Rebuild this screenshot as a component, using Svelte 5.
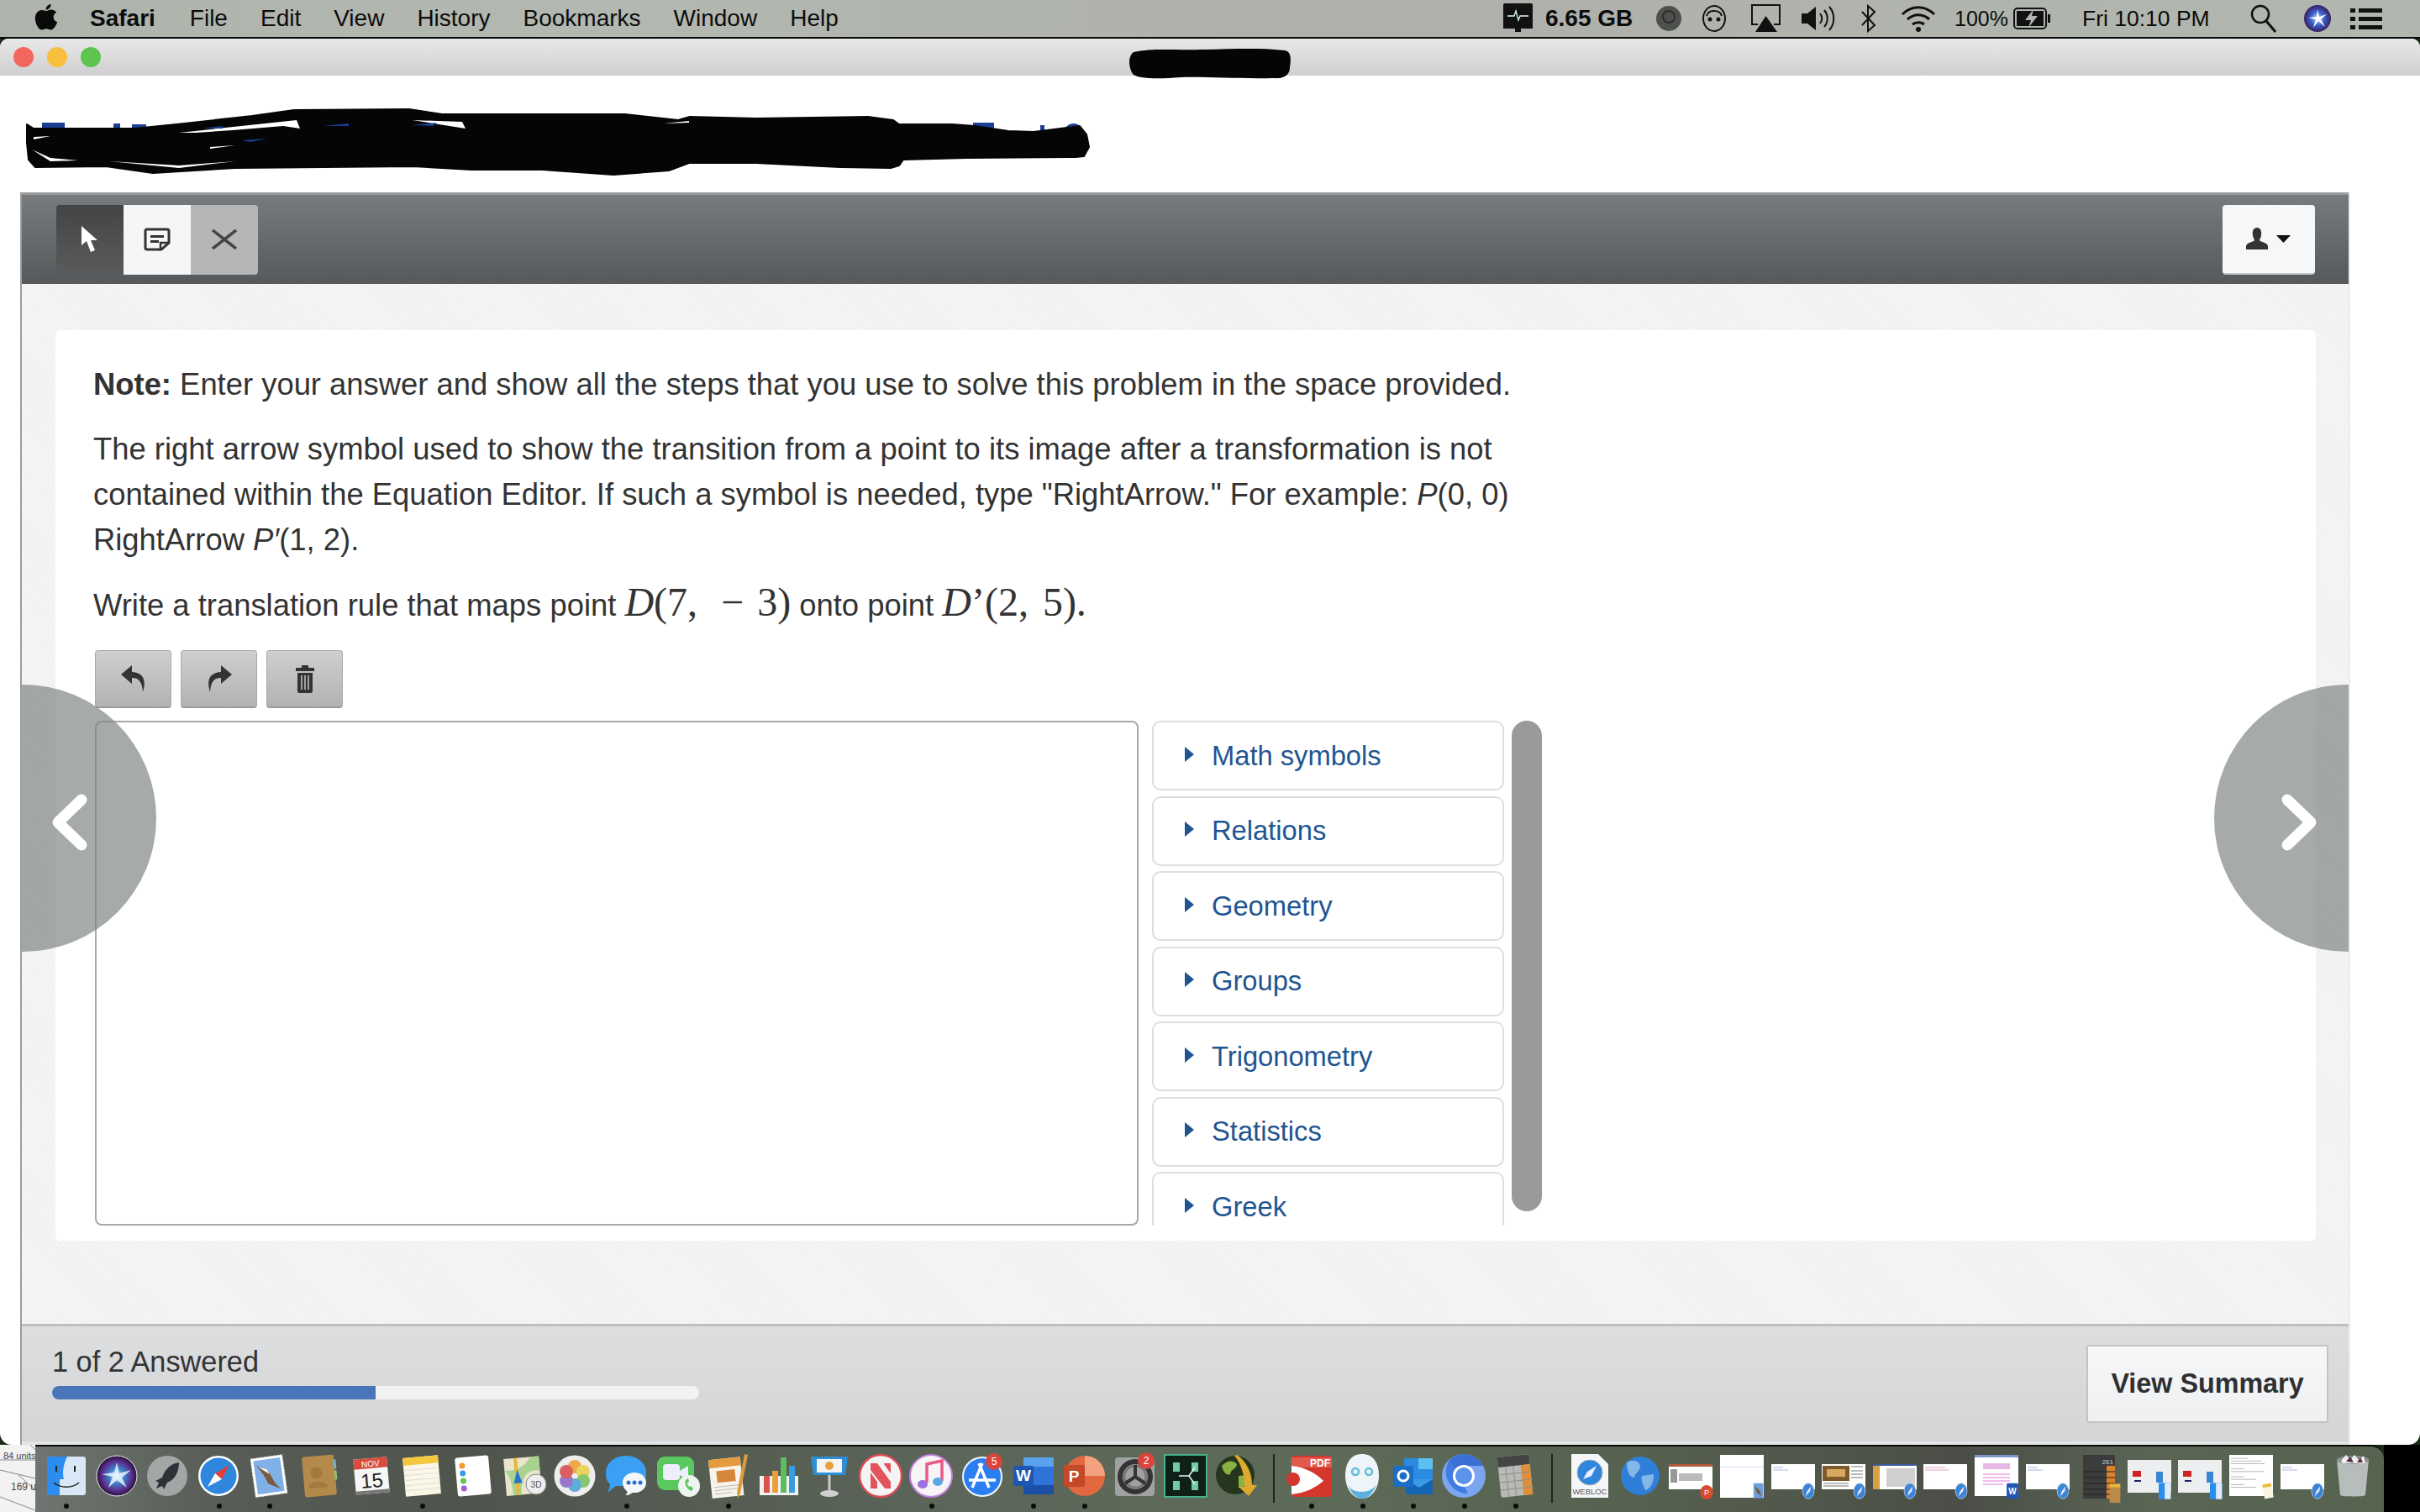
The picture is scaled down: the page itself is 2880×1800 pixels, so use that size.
<script>
  const menus = ['File','Edit','View','History','Bookmarks','Window','Help'];
  const rows = ['Math symbols','Relations','Geometry','Groups','Trigonometry','Statistics','Greek'];
  const answered = 1, total = 2;
  const pct = (answered / total) * 100;
</script>

<div class="screen">
  <header class="menubar">
    <svg class="apple" width="28" height="32" viewBox="0 0 28 34"><path d="M20 1c.3 3-2.500 7-6.400 7C13.200 4.600 16.300 1.400 20 1zM14 9.500c1.800 0 3.500-1.500 6.400-1.500 2.300 0 4.900 1.200 6.400 3.500-5.400 3.100-4.400 10.500 1.200 12.500-1.500 4-4.700 9.500-8 9.500-2.200 0-3.200-1.400-5.800-1.400s-3.700 1.400-5.800 1.400C4.600 33.500 0 25.500 0 19 0 12.500 4 8.500 8.400 8.500c2.400 0 4.200 1 5.600 1z" fill="#0a0a0a"/></svg>
    <b class="app">Safari</b>
    {#each menus as m}<span class="menu">{m}</span>{/each}
    <div class="spacer"></div>
    <svg class="mi m0" width="35" height="36" viewBox="0 0 35 36"><rect width="35" height="29" rx="2" fill="#111"/><rect x="14" y="29" width="7" height="5" fill="#111"/><rect y="26" width="35" height="4" fill="#111"/><path d="M5 15h8l2-6 3 11 2-5h10" stroke="#dfe" stroke-width="1.300" fill="none"/></svg>
    <b class="gb">6.65 GB</b>
    <svg class="mi m1" width="30" height="32" viewBox="0 0 30 32"><circle cx="15" cy="16" r="15" fill="#4d504c"/><circle cx="15" cy="14" r="7" fill="none" stroke="#2c2e2c" stroke-width="2"/></svg>
    <svg class="mi m1" width="28" height="32" viewBox="0 0 28 32"><ellipse cx="14" cy="16" rx="13" ry="15" fill="none" stroke="#111" stroke-width="2"/><path d="M5 13c2-8 16-8 18 0" fill="none" stroke="#111" stroke-width="2"/><circle cx="9" cy="17" r="2.500" fill="#111"/><circle cx="19" cy="17" r="2.500" fill="#111"/></svg>
    <svg class="mi m2" width="35" height="34" viewBox="0 0 35 34"><path d="M8 24H1V1h33v23h-7" fill="none" stroke="#111" stroke-width="2"/><path d="M17.500 14L31 33H5z" fill="#111"/></svg>
    <svg class="mi m3" width="41" height="32" viewBox="0 0 41 32"><path d="M0 10h7l10-8v28L7 22H0z" fill="#111"/><path d="M22 10c3 4 3 8 0 12M27 6c5 6 5 14 0 20M33 2c7 8 7 20 0 28" fill="none" stroke="#111" stroke-width="2"/></svg>
    <svg class="mi m4" width="19" height="34" viewBox="0 0 19 34"><path d="M2 9l15 16-8 7V2l8 7L2 25" fill="none" stroke="#111" stroke-width="2"/></svg>
    <svg class="mi m4" width="42" height="32" viewBox="0 0 42 32"><path d="M2 11c11-11 27-11 38 0M8 17c8-7 18-7 26 0M14 23c4-3 10-3 14 0" fill="none" stroke="#111" stroke-width="3"/><circle cx="21" cy="29" r="3" fill="#111"/></svg>
    <span class="pc">100%</span>
    <svg class="mi m5" width="45" height="26" viewBox="0 0 45 26"><rect x="1" y="1" width="38" height="24" rx="4" fill="none" stroke="#111" stroke-width="2"/><rect x="4" y="4" width="32" height="18" fill="#111"/><rect x="41" y="8" width="3" height="10" fill="#111"/><path d="M24 2L14 15h7l-3 9 11-14h-7z" fill="#b0b5ae"/></svg>
    <span class="clock">Fri 10:10 PM</span>
    <svg class="mi m6" width="31" height="34" viewBox="0 0 31 34"><circle cx="12" cy="12" r="10" fill="none" stroke="#111" stroke-width="2.500"/><path d="M19 20l11 13" stroke="#111" stroke-width="3"/></svg>
    <svg class="mi m7" width="32" height="32" viewBox="0 0 32 32"><defs><radialGradient id="sr"><stop offset="0" stop-color="#bfe9ff"/><stop offset=".5" stop-color="#3a63c9"/><stop offset="1" stop-color="#3a1d62"/></radialGradient></defs><circle cx="16" cy="16" r="16" fill="url(#sr)"/><path d="M16 5l2 9 9-3-7 6 5 9-8-7-6 8 3-10-9-2 10-1z" fill="#fff"/></svg>
    <svg class="mi m8" width="38" height="26" viewBox="0 0 38 26"><path d="M0 1h6v5H0zM0 11h6v5H0zM0 21h6v5H0zM10 1h28v5H10zM10 11h28v5H10zM10 21h28v5H10z" fill="#111"/></svg>
  </header>

  <div class="window">
    <div class="titlebar">
      <i class="light red"></i><i class="light yellow"></i><i class="light green"></i>
      <svg class="blackout" width="194" height="40" viewBox="0 0 194 40"><path d="M6 6C30 1 50 4 90 3s70-2 96 1c7 1 8 9 6 20 0 9-6 14-20 13-40 1-80-2-110-1-25 2-48 2-56-3C1 28-2 12 6 6z" fill="#050505"/></svg>
    </div>

    <div class="pagehead">
      <svg class="scribble" width="1300" height="100" viewBox="0 0 1300 100">
        <g fill="#1b3f92">
          <rect x="20" y="26" width="27" height="9"/><rect x="105" y="27" width="8" height="8"/><rect x="127" y="28" width="17" height="7"/><rect x="1128" y="26" width="25" height="7"/><rect x="1208" y="29" width="5" height="9"/><path d="M1238 32c5-7 16-7 20 2l-2 6h-16z"/>
        </g>
        <path d="M2 28L10 33 130 33 180 28 270 18 320 11 457 10 496 16 714 16 777 23 791 19 870 21 1003 19 1033 23 1040 28 1103 28 1130 30 1170 36 1200 37 1240 32 1255 30 1263 40 1266 55 1260 66 1250 67 1120 68 1045 70 1040 77 1030 80 970 79 870 74 790 74 766 83 700 88 615 82 531 82 461 78 250 80 152 86 96 78 12 79 4 70 2 50Z" fill="#050505" stroke="#050505" stroke-width="2" stroke-linejoin="round"/>
        <path d="M183 38L323 23 327 33 307 30 247 35 203 38ZM461 23L524 33 520 25ZM100 72L183 77 250 72 183 80ZM8 58L30 68 63 71 30 72ZM10 43L30 42 10 46ZM220 55L250 53 220 57ZM760 27L790 24 790 26Z" fill="#fff"/>
        <path d="M210 33l25-3 0 3zM355 30l30-3 0 3zM258 47l30-2-20 4zM460 29l30-3-5 4zM1 0" fill="#1b3f92"/>
      </svg>
    </div>

    <div class="player">
      <div class="toolbar">
        <div class="seg">
          <button class="tool dark" aria-label="select"><svg width="22" height="32" viewBox="0 0 22 32"><path d="M1 0v23l6-5 5 13 5-2-5-12h8z" fill="#fff"/></svg></button>
          <button class="tool light-t" aria-label="note"><svg width="32" height="28" viewBox="0 0 32 28"><path d="M4 2h24a2 2 0 0 1 2 2v14l-9 8H4a2 2 0 0 1-2-2V4a2 2 0 0 1 2-2z" fill="none" stroke="#333" stroke-width="3"/><path d="M8 9h16v3H8zM8 15h10v3H8z" fill="#333"/><path d="M29 18h-9v8" fill="none" stroke="#333" stroke-width="2.500"/></svg></button>
          <button class="tool mid" aria-label="close"><svg width="32" height="24" viewBox="0 0 32 24"><path d="M2 1l28 22M30 1L2 23" stroke="#444" stroke-width="3.500"/></svg></button>
        </div>
        <button class="user" aria-label="user"><svg width="54" height="26" viewBox="0 0 54 26"><path d="M13 0c4 0 6 4 5 9 0 3-2 5-2 6 1 2 10 3 10 7v4H0v-4c0-4 9-5 10-7 0-1-2-3-2-6-1-5 1-9 5-9z" fill="#333"/><path d="M36 9h17l-8.500 9z" fill="#111"/></svg></button>
      </div>

      <main class="content">
        <section class="card">
          <div class="prose">
            <p><b>Note:</b> Enter your answer and show all the steps that you use to solve this problem in the space provided.</p>
            <p>The right arrow symbol used to show the transition from a point to its image after a transformation is not contained within the Equation Editor. If such a symbol is needed, type "RightArrow." For example: <i>P</i>(0, 0) RightArrow <i>P′</i>(1, 2).</p>
            <p class="q">Write a translation rule that maps point <span class="tex"><i>D</i>(7,<span class="sp1"></span>−<span class="sp2"></span>3)</span> onto point <span class="tex"><i>D</i>’(2,<span class="sp3"></span>5).</span></p>
          </div>
          <div class="editbtns">
            <button class="ebtn" aria-label="undo"><svg width="30" height="32" viewBox="0 0 30 32"><path d="M13 0L0 11l13 11v-7c8 0 12 4 13 17 4-13 2-23-13-24z" fill="#333"/></svg></button>
            <button class="ebtn" aria-label="redo"><svg width="30" height="32" viewBox="0 0 30 32"><path d="M17 0l13 11-13 11v-7C9 15 5 19 4 32 0 19 2 9 17 8z" fill="#333"/></svg></button>
            <button class="ebtn" aria-label="delete"><svg width="24" height="34" viewBox="0 0 24 34"><path d="M8 1h8v3h7v4H1V4h7zM3 10h18v22a2 2 0 0 1-2 2H5a2 2 0 0 1-2-2z" fill="#333"/><path d="M8 13v17M12 13v17M16 13v17" stroke="#bbb" stroke-width="1.600"/></svg></button>
          </div>
          <div class="editor">
            <div class="answer"></div>
            <div class="palette">
              {#each rows as r}
                <div class="row"><span class="tri"></span><span>{r}</span></div>
              {/each}
            </div>
            <div class="thumb"></div>
          </div>
        </section>
      </main>

      <footer class="foot">
        <div class="prog">
          <div class="plabel">{answered} of {total} Answered</div>
          <div class="pbar"><div class="pfill" style:width="{pct}%"></div></div>
        </div>
        <button class="summary">View Summary</button>
      </footer>

      <div class="nav prev"><svg width="46" height="70" viewBox="0 0 46 70"><path d="M37 8L9 35l28 27" fill="none" stroke="#fff" stroke-width="13" stroke-linecap="round" stroke-linejoin="round"/></svg></div>
      <div class="nav next"><svg width="46" height="70" viewBox="0 0 46 70"><path d="M9 8l28 27L9 62" fill="none" stroke="#fff" stroke-width="13" stroke-linecap="round" stroke-linejoin="round"/></svg></div>
    </div>
  </div>

  <div class="bottom">
    <div class="geo">
      <svg width="42" height="80" viewBox="0 0 42 80"><path d="M36 0l6 6M0 30l42 10M22 36L42 54M0 62l42 16M0 18h42" stroke="#888" fill="none"/></svg>
      <span class="g1">84 units²</span><span class="g2">169 unit</span>
    </div>
    <nav class="dock">
      <div class="slot on"><svg width="60" height="60" viewBox="0 0 60 60"><rect x="8" y="7" width="46" height="46" rx="3" fill="#d8e8f6"/><path d="M11 7h21c-5 10-6 20-4 27h-5v19H11a3 3 0 0 1-3-3V10a3 3 0 0 1 3-3z" fill="#2b8df0"/><path d="M19 18v7M41 18v7" stroke="#222" stroke-width="2"/><path d="M16 38c8 7 22 7 30 0" fill="none" stroke="#222" stroke-width="1.500"/></svg></div>
      <div class="slot"><svg width="60" height="60" viewBox="0 0 60 60"><defs><radialGradient id="s2"><stop offset="0" stop-color="#e9f8ff"/><stop offset=".35" stop-color="#3e88c9"/><stop offset=".75" stop-color="#5b2b8d"/><stop offset="1" stop-color="#231436"/></radialGradient></defs><circle cx="30" cy="30" r="24" fill="url(#s2)" stroke="#eee"/><path d="M30 14l3 13 14-4-11 9 6 12-12-9-10 9 5-13-13-3 15-2z" fill="#e8f4ff" opacity=".85"/></svg></div>
      <div class="slot"><svg width="60" height="60" viewBox="0 0 60 60"><circle cx="30" cy="30" r="24" fill="#a4a6a6"/><path d="M44 14c-9 1-17 8-20 18l-8 4 4 2-3 7 7-3 2 4 4-8c9-3 14-13 14-24z" fill="#2e3136"/></svg></div>
      <div class="slot on"><svg width="60" height="60" viewBox="0 0 60 60"><circle cx="30" cy="30" r="24" fill="#fff"/><circle cx="30" cy="30" r="21.500" fill="#2e87dd"/><path d="M43 17L26 27l8 7z" fill="#e53d33"/><path d="M17 43l9-16 8 7z" fill="#fff"/></svg></div>
      <div class="slot on"><svg width="60" height="60" viewBox="0 0 60 60"><g transform="rotate(-8 30 30)"><rect x="10" y="7" width="38" height="46" fill="#fff" stroke="#ddd" stroke-dasharray="2 2"/><rect x="13" y="10" width="32" height="40" fill="#7fb0e6"/><path d="M16 16l14 10 5 13 6 8-14-8-4-11z" fill="#7a5a3e"/><path d="M18 18l10 4 2 6z" fill="#eee"/></g></svg></div>
      <div class="slot"><svg width="60" height="60" viewBox="0 0 60 60"><g transform="rotate(-5 30 30)"><rect x="10" y="6" width="38" height="48" rx="3" fill="#b48a4b"/><rect x="47" y="12" width="3" height="11" fill="#6ab1d8"/><rect x="47" y="25" width="3" height="11" fill="#8cc07a"/><circle cx="26" cy="26" r="7" fill="#a07a3e"/><path d="M14 44c2-10 22-10 24 0z" fill="#a07a3e"/></g></svg></div>
      <div class="slot"><svg width="60" height="60" viewBox="0 0 60 60"><g transform="rotate(-5 30 30)"><rect x="10" y="9" width="40" height="42" fill="#f6f6f6"/><rect x="10" y="9" width="40" height="12" fill="#d84c3f"/><rect x="10" y="47" width="40" height="4" fill="#777"/><text x="30" y="19" font-size="10" text-anchor="middle" fill="#fff" font-family="Liberation Sans, sans-serif">NOV</text><text x="30" y="44" font-size="24" text-anchor="middle" fill="#222" font-family="Liberation Sans, sans-serif">15</text></g></svg></div>
      <div class="slot on"><svg width="60" height="60" viewBox="0 0 60 60"><g transform="rotate(-5 30 30)"><rect x="9" y="7" width="42" height="46" fill="#fbf7e6"/><rect x="9" y="7" width="42" height="9" fill="#f5c93f"/><path d="M9 22h42M9 28h42M9 34h42M9 40h42M9 46h42" stroke="#ddd"/></g></svg></div>
      <div class="slot"><svg width="60" height="60" viewBox="0 0 60 60"><g transform="rotate(-5 30 30)"><rect x="10" y="7" width="40" height="46" rx="3" fill="#fff"/><circle cx="18" cy="17" r="3.500" fill="#f29b38"/><circle cx="18" cy="26" r="3.500" fill="#3a9be5"/><circle cx="18" cy="35" r="3.500" fill="#62c555"/><circle cx="18" cy="44" r="3.500" fill="#a560d8"/></g></svg></div>
      <div class="slot"><svg width="60" height="60" viewBox="0 0 60 60"><g transform="rotate(-5 30 30)"><rect x="7" y="8" width="42" height="44" fill="#e9e4cb"/><path d="M7 22c14 2 26-4 32-14h10v18c-12-6-24 4-24 26H15c0-14-2-24-8-30z" fill="#a9d28e"/><path d="M21 8v44" stroke="#e8b83c" stroke-width="4"/><path d="M22 22l5 16H17z" fill="#2374d1"/></g><circle cx="44" cy="40" r="12" fill="#eee" stroke="#888"/><text x="44" y="44" font-size="10" text-anchor="middle" fill="#555" font-family="Liberation Sans, sans-serif">3D</text></svg></div>
      <div class="slot"><svg width="60" height="60" viewBox="0 0 60 60"><circle cx="30" cy="30" r="24.500" fill="#eee"/><g opacity=".9"><circle cx="30" cy="19" r="8" fill="#f0a13a"/><circle cx="40" cy="25" r="8" fill="#e9d34e"/><circle cx="40" cy="36" r="8" fill="#7dc261"/><circle cx="30" cy="41" r="8" fill="#4ea6d9"/><circle cx="20" cy="36" r="8" fill="#8e6cc4"/><circle cx="20" cy="25" r="8" fill="#d9504f"/></g></svg></div>
      <div class="slot on"><svg width="60" height="60" viewBox="0 0 60 60"><path d="M30 6c14 0 24 9 24 21 0 6-3 11-7 15H18L8 50c1-3 3-6 3-10-4-4-5-8-5-13C6 15 16 6 30 6z" fill="#3aa0f4"/><path d="M40 26c8 0 14 5 14 12s-6 12-14 12c-2 0-3 0-4 1-2 2-5 2-7 2 2-1 3-3 2-5-3-2-5-6-5-10 0-7 6-12 14-12z" fill="#f3f6fb"/><circle cx="33" cy="38" r="2.500" fill="#2a6fd1"/><circle cx="40" cy="38" r="2.500" fill="#2a6fd1"/><circle cx="47" cy="38" r="2.500" fill="#2a6fd1"/></svg></div>
      <div class="slot"><svg width="60" height="60" viewBox="0 0 60 60"><rect x="7" y="7" width="44" height="40" rx="9" fill="#59c85d"/><rect x="14" y="16" width="20" height="19" rx="4" fill="#eef"/><path d="M34 24l10-6v17l-10-6z" fill="#eef"/><circle cx="45" cy="42" r="13" fill="#f0f4f0"/><path d="M41 35c-2 4 1 11 7 13l2-3-3-3-2 1c-1-1-2-3-2-5l2-1-1-4z" fill="#59c85d"/></svg></div>
      <div class="slot on"><svg width="60" height="60" viewBox="0 0 60 60"><g transform="rotate(-6 30 30)"><rect x="9" y="9" width="38" height="46" fill="#f6f3ea"/><rect x="9" y="9" width="38" height="10" fill="#e69a3e"/><rect x="17" y="23" width="22" height="14" fill="#d6873a"/><path d="M13 42h30M13 46h30M13 50h20" stroke="#bbb"/></g><path d="M50 4l4 1-9 46-3 6-1-7z" fill="#dd9a3f"/></svg></div>
      <div class="slot"><svg width="60" height="60" viewBox="0 0 60 60"><rect x="7" y="30" width="46" height="23" fill="#f1f1f1"/><rect x="12" y="30" width="7" height="20" fill="#d9534b"/><rect x="22" y="24" width="7" height="26" fill="#e8a03d"/><rect x="32" y="8" width="7" height="42" fill="#5cbd5f"/><rect x="42" y="18" width="7" height="32" fill="#3a9be5"/></svg></div>
      <div class="slot"><svg width="60" height="60" viewBox="0 0 60 60"><path d="M8 7h44l-3 22H11z" fill="#2f8fd6"/><rect x="15" y="10" width="30" height="16" fill="#f4f4f4"/><circle cx="30" cy="18" r="5" fill="#e8a03d"/><rect x="28.500" y="29" width="3" height="21" fill="#ccc"/><ellipse cx="30" cy="51" rx="11" ry="4" fill="#cfcfcf"/></svg></div>
      <div class="slot"><svg width="60" height="60" viewBox="0 0 60 60"><circle cx="30" cy="30" r="25" fill="#f4f4f4" stroke="#d64c54" stroke-width="2.500"/><path d="M18 15l8 0 16 22v8h-7L18 23zM18 26l8 11v8h-8zM34 15h8v12l-8-11z" fill="#e2545c"/></svg></div>
      <div class="slot on"><svg width="60" height="60" viewBox="0 0 60 60"><circle cx="30" cy="30" r="25" fill="#f6f4f6" stroke="#c180d9" stroke-width="2"/><path d="M25 38V16l18-4v24" fill="none" stroke="#ea5a86" stroke-width="3.500"/><ellipse cx="20" cy="40" rx="6" ry="5" fill="#9a6fe0"/><ellipse cx="38" cy="37" rx="6" ry="5" fill="#5ea7e6"/></svg></div>
      <div class="slot"><svg width="60" height="60" viewBox="0 0 60 60"><circle cx="30" cy="31" r="24" fill="#f4f9ff"/><circle cx="30" cy="31" r="22" fill="#2a7ef0"/><path d="M30 15L18 44M26 15l12 29M14 35h32" stroke="#fff" stroke-width="3.500" fill="none"/><circle cx="44" cy="13" r="10" fill="#d9443c"/><text x="44" y="17" font-size="12" text-anchor="middle" fill="#fff" font-family="Liberation Sans, sans-serif">5</text></svg></div>
      <div class="slot on"><svg width="60" height="60" viewBox="0 0 60 60"><rect x="18" y="8" width="36" height="44" rx="2" fill="#2f74d8"/><rect x="18" y="8" width="36" height="11" fill="#5aa2ee"/><rect x="18" y="41" width="36" height="11" fill="#1c4fa6"/><rect x="6" y="18" width="24" height="24" rx="2" fill="#1e56b3"/><text x="18" y="36" font-size="19" font-weight="700" text-anchor="middle" fill="#fff" font-family="Liberation Sans, sans-serif">W</text></svg></div>
      <div class="slot on"><svg width="60" height="60" viewBox="0 0 60 60"><circle cx="31" cy="30" r="24" fill="#e2683f"/><path d="M31 6a24 24 0 0 1 24 24H31z" fill="#f3a17f"/><rect x="6" y="17" width="25" height="26" rx="2" fill="#c4492a"/><text x="18" y="37" font-size="19" font-weight="700" text-anchor="middle" fill="#fff" font-family="Liberation Sans, sans-serif">P</text></svg></div>
      <div class="slot"><svg width="60" height="60" viewBox="0 0 60 60"><rect x="6" y="8" width="47" height="46" rx="4" fill="#a0a1a3"/><circle cx="30" cy="31" r="18" fill="none" stroke="#333" stroke-width="6"/><circle cx="30" cy="31" r="13" fill="none" stroke="#777" stroke-width="3"/><path d="M30 31V17M30 31l12 8M30 31l-12 8" stroke="#333" stroke-width="4"/><circle cx="43" cy="12" r="10" fill="#d9443c"/><text x="43" y="16" font-size="12" text-anchor="middle" fill="#fff" font-family="Liberation Sans, sans-serif">2</text></svg></div>
      <div class="slot"><svg width="60" height="60" viewBox="0 0 60 60"><rect x="5" y="5" width="50" height="50" fill="#0f2019" stroke="#48b08b" stroke-width="2"/><rect x="15" y="14" width="8" height="11" fill="#6fcaa5"/><rect x="37" y="14" width="8" height="11" fill="#6fcaa5"/><rect x="15" y="36" width="8" height="11" fill="#6fcaa5"/><rect x="37" y="36" width="8" height="11" fill="#6fcaa5"/><path d="M34 30L41 20M34 30l7 10M34 30H22" stroke="#e8f4ee" stroke-width="1.500"/></svg></div>
      <div class="slot"><svg width="60" height="60" viewBox="0 0 60 60"><circle cx="28" cy="29" r="23" fill="#26361c"/><path d="M12 18c8-8 14-6 18-2 0 6-8 6-8 12-4 2-8-2-10-10zM32 30c6-2 12 2 14 6-4 6-10 8-14 8z" fill="#87b143"/><path d="M30 5c12 8 18 22 18 36h6l-10 13-12-11h7c0-14-4-28-12-37z" fill="#dda92f"/></svg></div>
      <div class="sep"></div>
      <div class="slot on"><svg width="60" height="60" viewBox="0 0 60 60"><rect x="6" y="6" width="48" height="49" rx="4" fill="#d5362c"/><path d="M6 8h48v12H6z" fill="#e25a4e"/><path d="M6 18c18 2 30 10 38 18-8 7-20 14-38 16z" fill="#fff"/><circle cx="8" cy="34" r="8" fill="#d5362c"/><text x="52" y="19" font-size="12" font-weight="700" text-anchor="end" fill="#fff" font-family="Liberation Sans, sans-serif">PDF</text></svg></div>
      <div class="slot on"><svg width="60" height="60" viewBox="0 0 60 60"><path d="M30 4c13 0 20 10 20 26 0 14-8 27-20 27S10 44 10 30C10 14 17 4 30 4z" fill="#eef4f8"/><path d="M13 40c4 12 28 12 34 0-3 9-9 17-17 17s-14-8-17-17z" fill="#5ab1e0"/><circle cx="22" cy="25" r="4" fill="none" stroke="#5fbfd6" stroke-width="2.500"/><circle cx="38" cy="25" r="4" fill="none" stroke="#5fbfd6" stroke-width="2.500"/></svg></div>
      <div class="slot on"><svg width="60" height="60" viewBox="0 0 60 60"><rect x="19" y="9" width="34" height="26" fill="#2a8be0"/><rect x="36" y="9" width="17" height="13" fill="#5cc0ee"/><path d="M21 34h32v16a2 2 0 0 1-2 2H23a2 2 0 0 1-2-2z" fill="#1565b5"/><path d="M21 34l16 10 16-10" fill="#3a9ae6"/><rect x="6" y="18" width="24" height="25" rx="2" fill="#1a6ec8"/><circle cx="18" cy="30" r="6" fill="none" stroke="#fff" stroke-width="3"/></svg></div>
      <div class="slot on"><svg width="60" height="60" viewBox="0 0 60 60"><circle cx="30" cy="30" r="26" fill="#7ba5ee"/><path d="M30 4a26 26 0 0 1 23 14H30a12 12 0 0 0-11 7L13 11A26 26 0 0 1 30 4z" fill="#3b6fd4"/><path d="M13 11l12 20 10 20A26 26 0 0 1 13 11z" fill="#3f7be0"/><circle cx="30" cy="30" r="13" fill="#fff"/><circle cx="30" cy="30" r="10" fill="#5c92ea"/></svg></div>
      <div class="slot on"><svg width="60" height="60" viewBox="0 0 60 60"><g transform="rotate(-6 30 30)"><rect x="11" y="6" width="38" height="48" rx="2" fill="#b9b9b7"/><rect x="11" y="6" width="38" height="12" fill="#444"/><rect x="38" y="18" width="11" height="36" fill="#dd8f3c"/><path d="M11 27h38M11 36h38M11 45h38M20 18v36M29 18v36" stroke="#8e8e8c"/></g></svg></div>
      <div class="sep"></div>
      <div class="slot"><svg width="60" height="60" viewBox="0 0 60 60"><path d="M8 4h32l12 12v40H8z" fill="#f4f6f8"/><circle cx="30" cy="26" r="15" fill="#2e87dd" stroke="#aaa"/><path d="M38 18l-11 7 5 5zM22 34l5-9 5 5z" fill="#eef"/><text x="30" y="52" font-size="9.500" text-anchor="middle" fill="#555" font-family="Liberation Sans, sans-serif">WEBLOC</text></svg></div>
      <div class="slot"><svg width="60" height="60" viewBox="0 0 60 60"><circle cx="30" cy="30" r="23" fill="#2f7fd8"/><path d="M14 14c8-4 16-2 16 6-2 6-6 6-7 12-6 0-9-8-9-18zM32 30l14-2c1 8-4 18-10 19-2-6-6-12-4-17z" fill="#83b7ea"/></svg></div>
      <div class="slot"><div class="win"><svg viewBox="0 0 52 30" preserveAspectRatio="none"><rect width="52" height="3" fill="#b35a3a"/><rect x="12" y="11" width="28" height="9" fill="#bbb"/><rect x="2" y="6" width="8" height="16" fill="#999"/></svg></div><svg class="badge" width="18" height="20" viewBox="0 0 22 26"><ellipse cx="11" cy="15" rx="10" ry="11" fill="#d84b2c"/><text x="11" y="20" font-size="12" text-anchor="middle" fill="#fff" font-family="Liberation Sans, sans-serif">P</text></svg></div>
      <div class="slot"><div class="win tall"><svg viewBox="0 0 52 51" preserveAspectRatio="none"><rect y="14" width="52" height="1" fill="#cde"/></svg></div><svg class="badge" width="16" height="20" viewBox="0 0 18 26"><rect x="1" y="1" width="15" height="23" fill="#6f9fd8"/><path d="M3 5l8 8 2 8-7-6z" fill="#7a5a3e"/></svg></div>
      <div class="slot"><div class="win"><svg viewBox="0 0 52 30" preserveAspectRatio="none"><path d="M2 4h12M2 7h18" stroke="#a9b6e0"/></svg></div><svg class="badge" width="18" height="20" viewBox="0 0 20 26"><ellipse cx="10" cy="13" rx="9" ry="12" fill="#3a85d6" stroke="#ccd"/><path d="M14 6L8 14l-2 7 7-8z" fill="#eef"/></svg></div>
      <div class="slot"><div class="win"><svg viewBox="0 0 52 30" preserveAspectRatio="none"><rect x="1" y="2" width="32" height="18" fill="#7c5a2b"/><rect x="6" y="6" width="22" height="9" fill="#d8a860"/><path d="M35 3h14M35 8h14M35 12h14M35 16h14M2 23h30M2 26h30" stroke="#777"/></svg></div><svg class="badge" width="18" height="20" viewBox="0 0 20 26"><ellipse cx="10" cy="13" rx="9" ry="12" fill="#3a85d6" stroke="#ccd"/><path d="M14 6L8 14l-2 7 7-8z" fill="#eef"/></svg></div>
      <div class="slot"><div class="win"><svg viewBox="0 0 52 30" preserveAspectRatio="none"><rect width="52" height="2" fill="#3a5aa0"/><rect y="2" width="8" height="28" fill="#d8a040"/><rect x="16" y="5" width="34" height="22" fill="#d0d0d0"/></svg></div><svg class="badge" width="18" height="20" viewBox="0 0 20 26"><ellipse cx="10" cy="13" rx="9" ry="12" fill="#3a85d6" stroke="#ccd"/><path d="M14 6L8 14l-2 7 7-8z" fill="#eef"/></svg></div>
      <div class="slot"><div class="win"><svg viewBox="0 0 52 30" preserveAspectRatio="none"><path d="M2 4h24M2 7h28" stroke="#d8a0c0"/></svg></div><svg class="badge" width="18" height="20" viewBox="0 0 20 26"><ellipse cx="10" cy="13" rx="9" ry="12" fill="#3a85d6" stroke="#ccd"/><path d="M14 6L8 14l-2 7 7-8z" fill="#eef"/></svg></div>
      <div class="slot"><div class="win doc"><svg viewBox="0 0 52 49" preserveAspectRatio="none"><rect width="52" height="3" fill="#7c95c8"/><rect x="10" y="10" width="32" height="7" fill="#e8b8e4"/><path d="M10 23h32M10 27h32M10 31h32M10 35h24" stroke="#e078d8"/></svg></div><svg class="badge" width="18" height="20" viewBox="0 0 20 26"><rect x="1" y="1" width="18" height="24" rx="2" fill="#1e56b3"/><text x="10" y="18" font-size="13" font-weight="700" text-anchor="middle" fill="#fff" font-family="Liberation Sans, sans-serif">W</text></svg></div>
      <div class="slot"><div class="win"><svg viewBox="0 0 52 30" preserveAspectRatio="none"><path d="M2 4h12M2 7h18" stroke="#a9b6e0"/></svg></div><svg class="badge" width="18" height="20" viewBox="0 0 20 26"><ellipse cx="10" cy="13" rx="9" ry="12" fill="#3a85d6" stroke="#ccd"/><path d="M14 6L8 14l-2 7 7-8z" fill="#eef"/></svg></div>
      <div class="slot"><div class="win calc"><svg viewBox="0 0 38 52" preserveAspectRatio="none"><text x="36" y="11" font-size="8" text-anchor="end" fill="#ccc" font-family="Liberation Sans, sans-serif">261</text><rect x="28" y="13" width="10" height="39" fill="#d9822f"/><path d="M0 20h38M0 27h38M0 34h38M0 41h38M0 47h38" stroke="#222"/></svg></div><svg class="badge" width="16" height="24" viewBox="0 0 22 34"><rect x="2" y="6" width="18" height="28" fill="#b98a4a"/><rect x="2" y="2" width="18" height="6" fill="#e8b83c"/></svg></div>
      <div class="slot"><div class="win grey"><svg viewBox="0 0 52 39" preserveAspectRatio="none"><path d="M6 13h10v7H6z" fill="#c22"/><path d="M8 24h8v2H8z" fill="#226"/><rect x="34" y="14" width="8" height="13" fill="#3a85d6"/></svg></div><svg class="badge" width="16" height="20" viewBox="0 0 20 24"><rect width="18" height="24" fill="#2a8df0"/><rect x="9" width="9" height="24" fill="#e0ecf8"/></svg></div>
      <div class="slot"><div class="win grey"><svg viewBox="0 0 52 39" preserveAspectRatio="none"><path d="M6 13h10v7H6z" fill="#c22"/><path d="M8 24h8v2H8z" fill="#226"/><rect x="34" y="14" width="8" height="13" fill="#3a85d6"/></svg></div><svg class="badge" width="16" height="20" viewBox="0 0 20 24"><rect width="18" height="24" fill="#2a8df0"/><rect x="9" width="9" height="24" fill="#e0ecf8"/></svg></div>
      <div class="slot"><div class="win doc"><svg viewBox="0 0 52 47" preserveAspectRatio="none"><path d="M2 4h20M2 7h36M2 10h40M2 16h16M2 19h40M2 25h16M2 28h30M2 34h16M2 37h30" stroke="#999" stroke-width=".7"/></svg></div><svg class="badge" width="16" height="20" viewBox="0 0 20 30"><g transform="rotate(-10 10 15)"><rect x="2" y="2" width="16" height="26" fill="#f8f4e0"/><rect x="2" y="2" width="16" height="6" fill="#e8c040"/></g></svg></div>
      <div class="slot"><div class="win"><svg viewBox="0 0 52 30" preserveAspectRatio="none"><path d="M2 4h12M2 7h18" stroke="#a9b6e0"/></svg></div><svg class="badge" width="18" height="20" viewBox="0 0 20 26"><ellipse cx="10" cy="13" rx="9" ry="12" fill="#3a85d6" stroke="#ccd"/><path d="M14 6L8 14l-2 7 7-8z" fill="#eef"/></svg></div>
      <div class="slot"><svg width="60" height="60" viewBox="0 0 60 60"><path d="M11 10h38l-4 43c-2 2-28 2-30 0z" fill="#c8cccc" opacity=".85"/><ellipse cx="30" cy="11" rx="19" ry="5" fill="#8c9090"/><path d="M16 12l6-7 5 6 5-6 5 6 6-5 2 9H18z" fill="#eee"/><path d="M22 13l5-6 4 7zM35 14l4-6 3 6z" fill="#534"/></svg></div>
    </nav>
    <div class="corner"></div>
  </div>
</div>

<style>
  :global(body){margin:0;background:#000;}
  .screen{width:2880px;height:1800px;overflow:hidden;display:flex;flex-direction:column;background:#1c2a1a;font-family:"Liberation Sans",Arial,sans-serif;color:#333;}
  button{font-family:inherit;padding:0;cursor:pointer;display:flex;align-items:center;justify-content:center;}

  .menubar{height:44px;flex:none;display:flex;align-items:center;padding:0 45px 0 41px;background:linear-gradient(90deg,#aeb3ac,#b3b8b1 25%,#aeb0ab 55%,#b1b7ae);color:#0c0c0c;font-size:28px;border-bottom:2px solid #0a0a0a;}
  .apple{margin-right:38px;margin-top:-4px;}
  .app{font-size:28px;margin-right:2px;}
  .menu{margin-left:39px;}
  .spacer{flex:1;}
  .mi{flex:none;}
  .gb{margin-left:15px;width:107px;white-space:nowrap;font-size:28px;}
  .m1{margin-left:25px;}
  .m2{margin-left:30px;}
  .m3{margin-left:25px;}
  .m4{margin-left:29px;}
  .pc{margin-left:22px;font-size:25px;width:61px;}
  .m5{margin-left:9px;}
  .clock{margin-left:37px;width:157px;white-space:nowrap;font-size:26.500px;}
  .m6{margin-left:43px;}
  .m7{margin-left:33px;}
  .m8{margin-left:23px;}

  .window{height:1674px;flex:none;background:#fff;border-radius:10px 10px 14px 14px;overflow:hidden;display:flex;flex-direction:column;}
  .titlebar{height:44px;flex:none;position:relative;display:flex;align-items:center;gap:16px;padding-left:16px;background:linear-gradient(#e8e8e8,#cfcfcf);}
  .light{width:24px;height:24px;border-radius:50%;}
  .red{background:#f3665e;}
  .yellow{background:#f8bf3f;}
  .green{background:#5cc44f;}
  .blackout{position:absolute;left:1343px;top:10px;z-index:2;}

  .pagehead{height:139px;flex:none;position:relative;}
  .scribble{position:absolute;left:30px;top:30px;}

  .player{flex:1;margin-left:24px;width:2773px;box-sizing:border-box;display:flex;flex-direction:column;position:relative;border-left:2px solid #9c9c9c;border-right:2px solid #ececec;min-height:0;}
  .toolbar{height:109px;flex:none;box-sizing:border-box;border-top:3px solid #999b9c;padding:11px 40px 11px 41px;display:flex;justify-content:space-between;align-items:center;background:linear-gradient(#777b7d,#55595c);}
  .seg{display:flex;}
  .tool{width:80px;height:83px;border:none;}
  .dark{background:linear-gradient(#444,#5b5b5b);border-radius:4px 0 0 4px;}
  .light-t{background:#f5f6f8;}
  .mid{background:#b4b6b8;border-radius:0 4px 4px 0;}
  .user{width:110px;height:83px;background:#f6f7f9;border:none;border-bottom:2px solid #c5c7c9;border-radius:4px;}

  .content{flex:1;min-height:0;padding:55px 39px 0 40px;box-sizing:border-box;background-color:#f3f3f3;background-image:repeating-linear-gradient(45deg,#f6f6f6 0 2px,#f0f0f0 2px 4px);}
  .card{height:1084px;box-sizing:border-box;background:#fff;border-radius:6px;padding:38px 0 0 45px;}
  .prose{width:1730px;font-size:36.400px;line-height:54px;}
  .prose p{margin:0 0 23px;}
  .prose .q{margin-bottom:0;}
  .tex{font-family:"Liberation Serif",serif;font-size:48px;line-height:1;}
  .sp1{display:inline-block;width:28px;}
  .sp2{display:inline-block;width:16px;}
  .sp3{display:inline-block;width:17px;}
  .editbtns{display:flex;gap:11px;margin:26px 0 15px 2px;}
  .ebtn{width:91px;height:69px;border:1px solid #a9a9a9;border-bottom:2px solid #9a9a9a;border-radius:4px;background:linear-gradient(#cfcfcf,#b2b2b2);}
  .editor{display:flex;margin-left:2px;height:601px;}
  .answer{width:1242px;box-sizing:border-box;border:2px solid #a8a8a8;border-radius:8px;background:#fff;flex:none;}
  .palette{width:419px;margin-left:16px;flex:none;overflow:hidden;display:flex;flex-direction:column;gap:6.500px;}
  .row{height:83px;flex:none;box-sizing:border-box;border:2px solid #dedede;border-radius:10px;display:flex;align-items:center;padding-left:37px;gap:21px;font-size:32.700px;color:#1f5591;background:#fff;}
  .tri{width:0;height:0;border-left:11px solid #1f5591;border-top:9px solid transparent;border-bottom:9px solid transparent;margin-top:-4px;}
  .thumb{width:36px;height:584px;margin-left:9px;border-radius:18px;background:#9a9a9a;flex:none;}

  .foot{height:144px;flex:none;box-sizing:border-box;border-top:3px solid #bdbfc0;border-bottom:4px solid #e4e5e5;background:linear-gradient(#dddee0,#d4d5d7);display:flex;justify-content:space-between;padding:0 24px 0 36px;}
  .prog{width:770px;padding-top:22px;}
  .plabel{font-size:34.300px;line-height:40px;}
  .pbar{height:16px;margin-top:9px;border-radius:8px;background:#f2f2f2;overflow:hidden;}
  .pfill{height:100%;background:#4a75b9;}
  .summary{margin-top:22px;width:288px;height:93px;font-weight:700;font-size:32.300px;color:#2e3033;background:linear-gradient(#f6f7f9,#eff0f2);border:2px solid #c2c3c5;border-radius:3px;}

  .nav{position:absolute;top:586px;width:160px;height:318px;background:rgba(125,130,130,.68);display:flex;align-items:center;}
  .nav svg{margin-top:10px;}
  .prev{left:0;border-radius:0 159px 159px 0;padding-left:34px;box-sizing:border-box;}
  .next{right:0;border-radius:159px 0 0 159px;justify-content:flex-end;padding-right:36px;box-sizing:border-box;}

  .bottom{flex:1;display:flex;min-height:0;}
  .geo{width:42px;flex:none;background:#f2f2f2;position:relative;overflow:hidden;color:#444;font-size:11px;white-space:nowrap;}
  .geo svg{position:absolute;left:0;top:0;}
  .g1{position:absolute;left:4px;top:7px;}
  .g2{position:absolute;left:13px;top:43px;font-size:12px;}
  .dock{width:2795px;flex:none;box-sizing:border-box;border-top:2px solid #0a0a0a;border-radius:0 16px 0 0;display:flex;padding-left:6px;background:linear-gradient(90deg,#6f7570,#575c56 8%,#4f544d 18%,#5c6659 40%,#5d6b58 55%,#56614f 68%,#4b4e47 82%,#5a6554 90%,#56634f);}
  .slot{width:60.600px;flex:none;height:78px;position:relative;display:flex;justify-content:center;padding-top:5px;box-sizing:border-box;}
  .slot.on::after{content:"";position:absolute;left:28px;bottom:4px;width:6px;height:6px;border-radius:50%;background:#0a0a0a;}
  .sep{width:28px;flex:none;position:relative;}
  .sep::after{content:"";position:absolute;left:13px;top:9px;width:2px;height:58px;background:#222;}
  .win{position:absolute;left:4px;top:21px;width:52px;height:30px;background:#fff;overflow:hidden;}
  .win.tall{top:10px;height:51px;}
  .win.doc{top:10px;height:49px;}
  .win.calc{left:12px;top:10px;width:38px;height:52px;background:#3c3c3c;}
  .win.grey{top:16px;height:39px;background:#eceef0;}
  .win svg{display:block;width:100%;height:100%;}
  .badge{position:absolute;right:3px;top:43px;}
  .corner{flex:1;background:#000;}
</style>
